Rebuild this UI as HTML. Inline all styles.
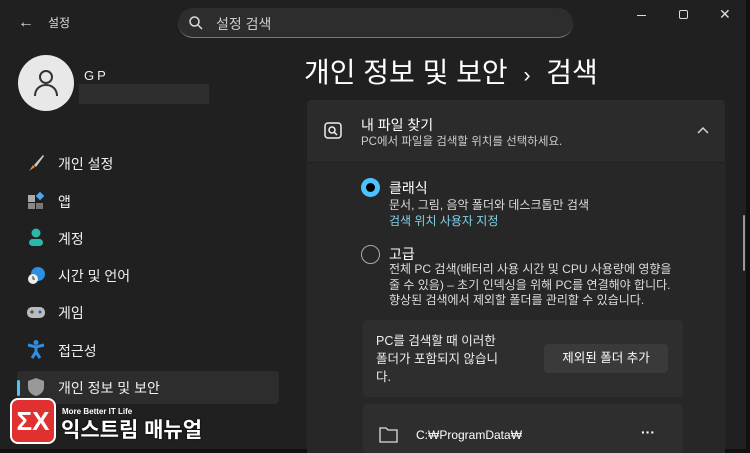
<!DOCTYPE html>
<html><head><meta charset="utf-8"><style>
*{margin:0;padding:0;box-sizing:border-box}
body{width:750px;height:453px;overflow:hidden;background:#202020;font-family:"Liberation Sans","Noto Sans CJK KR",sans-serif;color:#fff;position:relative}
.a{position:absolute}
.nav{position:absolute;left:58px;font-size:14px;color:#f0f0f0}
.ic{position:absolute;left:26px;width:20px;height:20px}
</style></head><body>
<div class="a" style="left:746px;top:0;width:4px;height:453px;background:#111"></div>
<div class="a" style="left:0;top:449px;width:750px;height:4px;background:#111"></div>
<div class="a" style="left:18px;top:14px;font-size:16px;color:#ddd">←</div>
<div class="a" style="left:48px;top:14px;font-size:12px;color:#ddd">설정</div>
<div class="a" style="left:178px;top:8px;width:395px;height:30px;border-radius:15px;background:#2d2d2d;border-bottom:1px solid #777"></div>
<svg class="a" style="left:188px;top:15px" width="16" height="16" viewBox="0 0 16 16"><circle cx="6.5" cy="6.5" r="4.5" fill="none" stroke="#ddd" stroke-width="1.5"/><path d="M10 10l4 4" stroke="#ddd" stroke-width="1.5"/></svg>
<div class="a" style="left:216px;top:14px;font-size:14px;color:#ccc">설정 검색</div>
<div class="a" style="left:637px;top:15px;width:9px;height:1px;background:#ddd"></div>
<div class="a" style="left:679px;top:10px;width:9px;height:9px;border:1px solid #ddd;border-radius:2px"></div>
<div class="a" style="left:719px;top:6px;font-size:14px;color:#ddd">✕</div>
<div class="a" style="left:18px;top:55px;width:56px;height:56px;border-radius:50%;background:#e8e8e8"></div>
<svg class="a" style="left:32px;top:68px" width="28" height="30" viewBox="0 0 28 30"><circle cx="14" cy="9" r="6" fill="none" stroke="#333" stroke-width="2"/><path d="M3 28c0-7 5-11 11-11s11 4 11 11" fill="none" stroke="#333" stroke-width="2"/></svg>
<div class="a" style="left:84px;top:68px;font-size:13px;letter-spacing:3px;color:#eee">GP</div>
<div class="a" style="left:79px;top:84px;width:130px;height:20px;background:#2e2e2e"></div>
<div class="ic" style="top:153px"><svg width="20" height="20"><path d="M3 18l4-6 2 2z" fill="#f09030"/><path d="M8 12L17 2l1 1-8 11z" fill="#ccc"/></svg></div>
<div class="nav" style="top:154px">개인 설정</div>
<div class="ic" style="top:191px"><svg width="20" height="20"><rect x="2" y="4" width="7" height="7" fill="#aaa"/><rect x="2" y="12" width="7" height="6" fill="#888"/><rect x="10" y="12" width="7" height="6" fill="#777"/><rect x="11" y="2" width="6" height="6" fill="#4aa8f0" transform="rotate(45 14 5)"/></svg></div>
<div class="nav" style="top:192px">앱</div>
<div class="ic" style="top:227px"><svg width="20" height="20"><circle cx="10" cy="6" r="4.5" fill="#2ab8a8"/><rect x="3" y="12" width="14" height="7" rx="3.5" fill="#2ab8a8"/></svg></div>
<div class="nav" style="top:229px">계정</div>
<div class="ic" style="top:265px"><svg width="20" height="20"><circle cx="12" cy="9" r="7" fill="#2e8fe0"/><circle cx="7" cy="14" r="5" fill="#eee"/><path d="M7 11v3h2" stroke="#333" fill="none"/></svg></div>
<div class="nav" style="top:266px">시간 및 언어</div>
<div class="ic" style="top:302px"><svg width="20" height="20"><rect x="1" y="5" width="18" height="11" rx="5" fill="#bbb"/><circle cx="14" cy="10" r="1.5" fill="#2060c0"/><path d="M4 10h4M6 8v4" stroke="#333"/></svg></div>
<div class="nav" style="top:303px">게임</div>
<div class="ic" style="top:339px"><svg width="20" height="20"><circle cx="10" cy="3.5" r="2.5" fill="#2e8fe0"/><path d="M2 6l8 2 8-2M10 8v5l-4 6M10 13l4 6" stroke="#2e8fe0" stroke-width="3" fill="none"/></svg></div>
<div class="nav" style="top:341px">접근성</div>
<div class="a" style="left:17px;top:371px;width:262px;height:33px;background:#2d2d2d;border-radius:4px"></div>
<div class="a" style="left:17px;top:380px;width:3px;height:16px;background:#4cc2ff;border-radius:2px"></div>
<div class="ic" style="top:377px"><svg width="20" height="20"><path d="M10 1l8 3v6c0 5-4 8-8 9-4-1-8-4-8-9V4z" fill="#999"/></svg></div>
<div class="nav" style="top:378px">개인 정보 및 보안</div>
<div class="a" style="left:10px;top:398px;width:46px;height:46px;background:#e03030;border:2px solid #fff;border-radius:8px;font-size:26px;font-weight:bold;text-align:center;line-height:42px">ΣX</div>
<div class="a" style="left:62px;top:407px;font-size:8px;font-weight:bold;color:#fff">More Better IT Life</div>
<div class="a" style="left:61px;top:414px;font-size:21px;font-weight:bold;color:#fff;text-shadow:0 0 2px #000">익스트림 매뉴얼</div>
<div class="a" style="left:304px;top:51px;font-size:28px;color:#fff;white-space:nowrap">개인 정보 및 보안 <span style="font-size:21px;margin:0 8px">›</span> 검색</div>
<div class="a" style="left:307px;top:100px;width:418px;height:62px;background:#2b2b2b;border-radius:4px 4px 0 0"></div>
<div class="a" style="left:307px;top:163px;width:418px;height:290px;background:#272727"></div>
<svg class="a" style="left:323px;top:121px" width="20" height="20" viewBox="0 0 20 20"><rect x="2" y="2" width="16" height="15" rx="3" fill="none" stroke="#eee" stroke-width="1.5"/><circle cx="9" cy="9" r="3" fill="none" stroke="#eee" stroke-width="1.5"/><path d="M11 11l3 3" stroke="#eee" stroke-width="1.5"/></svg>
<div class="a" style="left:361px;top:115px;font-size:14px">내 파일 찾기</div>
<div class="a" style="left:361px;top:133px;font-size:11.5px;color:#ccc">PC에서 파일을 검색할 위치를 선택하세요.</div>
<svg class="a" style="left:697px;top:126px" width="12" height="8"><path d="M1 7l5-5 5 5" stroke="#ddd" stroke-width="1.4" fill="none"/></svg>
<div class="a" style="left:361px;top:178px;width:19px;height:19px;border-radius:50%;background:#4cc2ff"></div>
<div class="a" style="left:366px;top:183px;width:9px;height:9px;border-radius:50%;background:#000"></div>
<div class="a" style="left:389px;top:178px;font-size:14px">클래식</div>
<div class="a" style="left:389px;top:196px;font-size:12px;color:#ddd">문서, 그림, 음악 폴더와 데스크톱만 검색</div>
<div class="a" style="left:389px;top:212px;font-size:12px;color:#7fd3ea">검색 위치 사용자 지정</div>
<div class="a" style="left:361px;top:245px;width:19px;height:19px;border-radius:50%;border:1.5px solid #aaa"></div>
<div class="a" style="left:389px;top:244px;font-size:14px">고급</div>
<div class="a" style="left:389px;top:262px;font-size:12px;color:#ddd;line-height:15.5px">전체 PC 검색(배터리 사용 시간 및 CPU 사용량에 영향을<br>줄 수 있음) – 초기 인덱싱을 위해 PC를 연결해야 합니다.<br>향상된 검색에서 제외할 폴더를 관리할 수 있습니다.</div>
<div class="a" style="left:363px;top:320px;width:320px;height:77px;background:#2e2e2e;border-radius:4px"></div>
<div class="a" style="left:376px;top:332px;font-size:12.5px;line-height:18px;color:#eee">PC를 검색할 때 이러한<br>폴더가 포함되지 않습니<br>다.</div>
<div class="a" style="left:544px;top:344px;width:124px;height:29px;background:#3a3a3a;border-radius:4px;font-size:12.5px;text-align:center;line-height:29px">제외된 폴더 추가</div>
<div class="a" style="left:363px;top:404px;width:320px;height:49px;background:#2e2e2e;border-radius:4px"></div>
<svg class="a" style="left:379px;top:426px" width="20" height="17"><path d="M1 2h6l2 2h9v12H1z" fill="none" stroke="#ddd" stroke-width="1.3"/></svg>
<div class="a" style="left:416px;top:428px;font-size:12px">C:₩ProgramData₩</div>
<div class="a" style="left:641px;top:424px;font-size:14px;font-weight:bold">···</div>
<div class="a" style="left:743px;top:215px;width:2px;height:56px;background:#999;border-radius:1px"></div>
</body></html>
